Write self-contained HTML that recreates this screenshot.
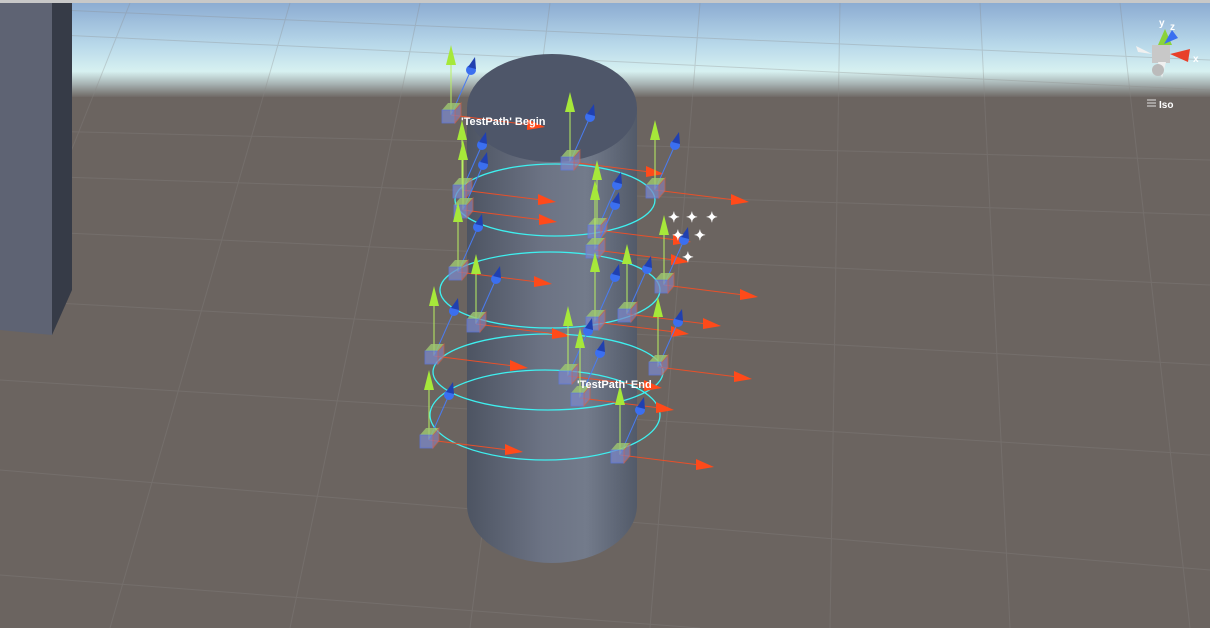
<!DOCTYPE html><html><head><style>html,body{margin:0;padding:0;width:1210px;height:628px;overflow:hidden;background:#6b6460}svg{display:block}text{font-family:"Liberation Sans",sans-serif;font-weight:bold;fill:#fff}</style></head><body>
<svg width="1210" height="628" viewBox="0 0 1210 628" xmlns="http://www.w3.org/2000/svg">
<defs>
<linearGradient id="sky" x1="0" y1="0" x2="0" y2="1">
<stop offset="0" stop-color="#8cacd2"/><stop offset="0.45" stop-color="#b9d9ea"/><stop offset="0.72" stop-color="#d7f1f1"/><stop offset="0.85" stop-color="#a8b4b4"/><stop offset="1" stop-color="#6b6460"/></linearGradient>
<linearGradient id="cyl" x1="0" y1="0" x2="1" y2="0">
<stop offset="0" stop-color="#4d5462"/><stop offset="0.45" stop-color="#6c7384"/><stop offset="0.7" stop-color="#737b8b"/><stop offset="1" stop-color="#525a69"/></linearGradient>
<g id="n">
<line x1="0" y1="0" x2="0" y2="-55" stroke="#b8f060" stroke-width="1"/>
<polygon points="-5,-50 0,-70 5,-50" fill="#a6e83a"/>
<line x1="0" y1="0" x2="20" y2="-45" stroke="#4a7cf0" stroke-width="1"/>
<circle cx="20" cy="-45" r="5" fill="#3b6ff0"/><polygon points="17,-48 24,-58 25,-46" fill="#2040b0"/>
<line x1="0" y1="0" x2="80" y2="10" stroke="#e8502a" stroke-width="1"/>
<polygon points="76,4 94,12 76,15" fill="#ff4a1a"/>
<polygon points="-9,-5 -3,-12 10,-12 4,-5" fill="#9fc870" opacity=".8"/>
<rect x="-9" y="-5" width="13" height="13" fill="#7c88c8" opacity=".75" stroke="#5b7af0" stroke-width=".8"/>
<polygon points="4,-5 10,-12 10,1 4,8" fill="#8a80b0" opacity=".7" stroke="#e06040" stroke-width=".8"/>
</g>
</defs>
<rect x="0" y="0" width="1210" height="3" fill="#c8c8c8"/>
<rect x="0" y="3" width="1210" height="95" fill="url(#sky)"/>
<rect x="0" y="97" width="1210" height="531" fill="#6b6460"/>
<g stroke="#8a8886" stroke-width="1" opacity=".3" fill="none">
<path d="M60 35 L1210 90"/><path d="M60 10 L1210 60"/>
<path d="M0 130 L1210 160"/><path d="M0 175 L1210 215"/><path d="M0 230 L1210 285"/><path d="M0 300 L1210 365"/><path d="M0 380 L1210 455"/><path d="M0 470 L1210 570"/><path d="M0 575 L700 628"/>
<path d="M130 3 L0 330"/><path d="M290 3 L110 628"/><path d="M420 3 L290 628"/><path d="M550 3 L470 628"/><path d="M700 3 L650 628"/><path d="M840 3 L830 628"/><path d="M980 3 L1010 628"/><path d="M1120 3 L1190 628"/>
</g>
<polygon points="0,3 52,3 52,335 0,330" fill="#5e6373"/>
<polygon points="52,3 72,3 72,290 52,335" fill="#363b47"/>
<rect x="467" y="108" width="170" height="397" fill="url(#cyl)"/>
<ellipse cx="552" cy="505" rx="85" ry="58" fill="url(#cyl)"/>
<ellipse cx="552" cy="108" rx="85" ry="54" fill="#4e5669"/>
<g fill="none" stroke="#3ef0f0" stroke-width="1.3">
<ellipse cx="555" cy="200" rx="100" ry="36"/>
<ellipse cx="550" cy="290" rx="110" ry="38"/>
<ellipse cx="548" cy="372" rx="115" ry="38"/>
<ellipse cx="545" cy="415" rx="115" ry="45"/>
</g>
<use href="#n" x="451" y="115"/><use href="#n" x="570" y="162"/><use href="#n" x="655" y="190"/>
<use href="#n" x="462" y="190"/><use href="#n" x="463" y="210"/><use href="#n" x="597" y="230"/>
<use href="#n" x="595" y="250"/><use href="#n" x="458" y="272"/><use href="#n" x="476" y="324"/>
<use href="#n" x="664" y="285"/><use href="#n" x="627" y="314"/><use href="#n" x="434" y="356"/>
<use href="#n" x="595" y="322"/><use href="#n" x="568" y="376"/><use href="#n" x="580" y="398"/>
<use href="#n" x="658" y="367"/><use href="#n" x="429" y="440"/><use href="#n" x="620" y="455"/>
<g fill="#fff" font-size="14">
<text x="668" y="222">✦</text><text x="686" y="222">✦</text><text x="706" y="222">✦</text>
<text x="672" y="240">✦</text><text x="694" y="240">✦</text><text x="682" y="262">✦</text>
</g>
<text x="461" y="125" font-size="11">'TestPath' Begin</text>
<text x="577" y="388" font-size="11">'TestPath' End</text>
<g>
<rect x="1152" y="45" width="18" height="18" fill="#c8c8c8"/>
<polygon points="1158,45 1165,29 1172,45" fill="#8bd33a"/>
<polygon points="1164,44 1172,30 1178,38" fill="#3a6ff0"/>
<polygon points="1170,54 1190,49 1188,62" fill="#e8402a"/>
<polygon points="1152,54 1136,46 1138,52" fill="#f0f0f0"/>
<polygon points="1158,62 1162,78 1166,62" fill="#f0f0f0"/>
<circle cx="1158" cy="70" r="6" fill="#bbb"/>
<text x="1159" y="26" font-size="10" fill="#fff">y</text><text x="1170" y="30" font-size="10">z</text><text x="1193" y="62" font-size="10">x</text>
<path d="M1147 100h9M1147 103h9M1147 106h9" stroke="#e0e0e0"/>
<text x="1159" y="108" font-size="10" font-weight="normal" fill="#e0e0e0">Iso</text>
</g>
</svg>
</body></html>
